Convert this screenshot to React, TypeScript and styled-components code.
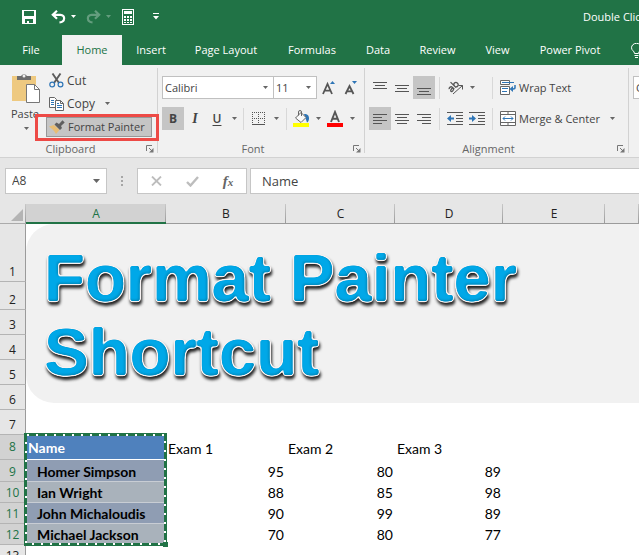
import React from "react";
import styled, { createGlobalStyle, css } from "styled-components";

const UI_FONT = '"Open Sans", "Noto Sans", sans-serif';
const CELL_FONT = 'Lato, "Open Sans", sans-serif';
const GREEN = "#217346";

const Global = createGlobalStyle`
  *, *::before, *::after { box-sizing: border-box; }
  body { margin: 0; background: #fff; overflow: hidden; }
  button, input, select { font: inherit; color: inherit; margin: 0; }
  button { cursor: pointer; }
  h1 { margin: 0; }
`;

const Page = styled.div`
  height: 100vh;
  display: flex;
  flex-direction: column;
  overflow: hidden;
  background: #e6e6e6;
  font: 11px/16px ${UI_FONT};
  color: #444;
`;

const PlainButton = styled.button`
  display: inline-flex;
  align-items: center;
  justify-content: center;
  flex: none;
  padding: 0;
  border: 0;
  background: none;
`;

/* ---------- title bar and tabs ---------- */

const TitleBar = styled.header`
  display: flex;
  align-items: center;
  height: 33px;
  padding-left: 21px;
  background: ${GREEN};
  color: #fff;
`;

const QuickButton = styled(PlainButton)<{ $w: number; $dim?: boolean }>`
  width: ${(p) => p.$w}px;
  height: 24px;
  opacity: ${(p) => (p.$dim ? 0.3 : 1)};
`;

const DocTitle = styled.div`
  flex: 1;
  min-width: 0;
  padding-left: 418px;
  overflow: hidden;
  white-space: nowrap;
`;

const TabBar = styled.nav`
  display: flex;
  height: 32px;
  padding-top: 2px;
  background: ${GREEN};
  overflow: hidden;
`;

const Tab = styled(PlainButton)<{ $w: number; $active?: boolean }>`
  width: ${(p) => p.$w}px;
  background: ${(p) => (p.$active ? "#f1f1f1" : "transparent")};
  color: ${(p) => (p.$active ? GREEN : "#fff")};
  white-space: nowrap;
`;

/* ---------- ribbon ---------- */

const Ribbon = styled.section`
  display: flex;
  height: 93px;
  padding-top: 3px;
  background: #f1f1f1;
  border-bottom: 1px solid #d2d2d2;
  overflow: hidden;
`;

const Group = styled.div<{ $w: number }>`
  position: relative;
  flex: none;
  display: flex;
  flex-direction: column;
  width: ${(p) => p.$w}px;
  margin-bottom: 4px;
  border-right: 1px solid #d2d2d2;
`;

const GroupBody = styled.div`
  display: flex;
  flex: none;
  flex-direction: column;
  gap: 8px;
  height: 73px;
  padding: 8px 0 0 4px;
`;

const ClipboardBody = styled.div`
  display: flex;
  flex: none;
  height: 73px;
  padding-left: 6px;
`;

const GroupFooter = styled.div`
  display: flex;
  flex: none;
  align-items: center;
  height: 16px;
  padding-right: 3px;
  color: #666;
`;

const GroupName = styled.span`
  flex: 1;
  padding-right: 5px;
  text-align: center;
`;

const Line = styled.div`
  display: flex;
  align-items: center;
  height: 23px;
`;

const Divider = styled.span<{ $mx?: number }>`
  width: 1px;
  height: 22px;
  margin: 0 ${(p) => p.$mx ?? 3}px;
  background: #d8d8d8;
`;

const Tool = styled(PlainButton)<{ $on?: boolean; $w?: number }>`
  width: ${(p) => p.$w ?? 22}px;
  height: 23px;
  background: ${(p) => (p.$on ? "#c5c5c5" : "transparent")};
  font-size: 12px;
`;

const Letter = styled.span<{ $kind: "b" | "i" | "u" }>`
  ${(p) => p.$kind === "b" && css`font-weight: 700;`}
  ${(p) => p.$kind === "i" && css`font: italic 700 14px "Liberation Serif", serif;`}
  ${(p) => p.$kind === "u" && css`font-weight: 600; text-decoration: underline; text-underline-offset: 2px;`}
`;

const PasteButton = styled(PlainButton)`
  flex-direction: column;
  justify-content: flex-start;
  width: 40px;
  padding-top: 4px;
`;

const PasteLabel = styled.span`
  margin: 3px 2px 5px 0;
  font-size: 11px;
`;

const CommandList = styled.div`
  display: flex;
  flex-direction: column;
  align-items: flex-start;
  padding-top: 1px;
`;

const Command = styled(PlainButton)<{ $on?: boolean }>`
  justify-content: flex-start;
  gap: 3px;
  height: ${(p) => (p.$on ? 20 : 23)}px;
  margin-top: ${(p) => (p.$on ? 2 : 0)}px;
  padding: 0 6px 0 2px;
  border: 1px solid ${(p) => (p.$on ? "#979797" : "transparent")};
  background: ${(p) => (p.$on ? "#c5c5c5" : "transparent")};
  font-size: ${(p) => (p.$on ? 11 : 12)}px;
  white-space: nowrap;
`;

const CaretSpace = styled.span`
  display: inline-flex;
  margin-left: 7px;
`;

const Highlight = styled.div`
  position: absolute;
  left: 35px;
  top: 46px;
  width: 124px;
  height: 27px;
  border: 3px solid #ed4a46;
  z-index: 2;
  pointer-events: none;
`;

const Combo = styled.div<{ $w: number }>`
  display: flex;
  align-items: center;
  flex: none;
  width: ${(p) => p.$w}px;
  height: 23px;
  padding-right: 5px;
  border: 1px solid #c0c0c0;
  background: #fff;
  & + & { margin-left: -1px; }
`;

const ComboInput = styled.input`
  flex: 1;
  min-width: 0;
  width: 100%;
  padding: 0 0 0 2px;
  border: 0;
  outline: 0;
  background: transparent;
`;

const WideTool = styled(PlainButton)`
  gap: 3px;
  height: 23px;
  padding-left: 3px;
  white-space: nowrap;
`;

const Pusher = styled.span<{ $w: number }>`
  flex: none;
  width: ${(p) => p.$w}px;
`;

/* ---------- formula bar ---------- */

const FormulaBar = styled.section`
  display: flex;
  align-items: center;
  height: 46px;
  padding: 0 0 0 5px;
  font-size: 13px;
`;

const Box = styled.div`
  display: flex;
  align-items: center;
  height: 26px;
  border: 1px solid #c6c6c6;
  background: #fff;
`;

const NameBox = styled(Box)`
  flex: none;
  width: 102px;
  padding-right: 6px;
  input { padding-left: 6px; font-size: 12px; }
`;

const Grip = styled.span`
  display: flex;
  flex: none;
  justify-content: center;
  width: 30px;
`;

const FormulaTools = styled(Box)`
  flex: none;
  width: 110px;
  margin-right: 3px;
`;

const FormulaField = styled(Box)`
  flex: 1;
  min-width: 0;
  border-right: 0;
  input { padding-left: 11px; }
`;

/* ---------- sheet ---------- */

const Sheet = styled.main`
  position: relative;
  flex: 1;
  min-height: 0;
  overflow: hidden;
`;

const Grid = styled.table`
  width: 100%;
  table-layout: fixed;
  border-collapse: separate;
  border-spacing: 0;
  background: #fff;
  color: #000;
  font: 14px/18px ${CELL_FONT};
`;

const Col = styled.col<{ $w?: number }>`
  width: ${(p) => (p.$w ? `${p.$w}px` : "auto")};
`;

const Row = styled.tr<{ $h: number; $middle?: boolean }>`
  height: ${(p) => p.$h}px;
  vertical-align: ${(p) => (p.$middle ? "middle" : "bottom")};
`;

const ColHead = styled.th<{ $on?: boolean }>`
  height: 20px;
  padding: 0;
  font: 12px/17px ${UI_FONT};
  color: ${(p) => (p.$on ? GREEN : "#222")};
  background:
    linear-gradient(#c8c8c8, #9b9b9b) right / 1px 100% no-repeat,
    ${(p) => (p.$on ? "#d2d2d2" : "#e6e6e6")};
  border-bottom: ${(p) => (p.$on ? `2px solid ${GREEN}` : "1px solid #9b9b9b")};
`;

const Corner = styled.th`
  padding: 0;
  background: linear-gradient(#c8c8c8, #9b9b9b) right / 1px 100% no-repeat, #e6e6e6;
  border-bottom: 1px solid #ababab;
  text-align: right;
  svg { display: block; margin: 2px 3px 0 auto; }
`;

const RowHead = styled.th<{ $on?: boolean }>`
  padding: 0;
  vertical-align: inherit;
  font: 12px/18px ${UI_FONT};
  color: ${(p) => (p.$on ? GREEN : "#222")};
  background: ${(p) => (p.$on ? "#d2d2d2" : "#e6e6e6")};
  border-right: 1px solid #9b9b9b;
  border-bottom: 1px solid #b4b4b4;
`;

type Tone = "head" | "dark" | "light";

const Cell = styled.td<{ $num?: boolean; $tone?: Tone }>`
  position: relative;
  padding: 0 ${(p) => (p.$num ? 2 : 0)}px 1px 2px;
  vertical-align: inherit;
  text-align: ${(p) => (p.$num ? "right" : "left")};
  white-space: nowrap;
  ${(p) => p.$tone === "head" && css`
    padding: 2px 0 0 2px; background: #4f81bd; color: #fff; font-weight: 700; border-bottom: 1px solid #fff;
  `}
  ${(p) => (p.$tone === "dark" || p.$tone === "light") && css`
    padding: 0 0 0 11px; font-weight: 700; border-bottom: 1px solid #c8cdd4;
    background: ${p.$tone === "dark" ? "#8f9db3" : "#a9b2bb"};
  `}
`;

const HeadingCell = styled(Cell)`
  padding: 2px 0 0 2px;
`;

const Marquee = styled.svg`
  position: absolute;
  left: -2px;
  top: -2px;
  width: 144px;
  height: 114px;
  z-index: 2;
  pointer-events: none;
  overflow: visible;
`;

const Banner = styled.div`
  position: absolute;
  left: 26px;
  right: 0;
  top: 20px;
  height: 179px;
  padding: 17px 0 0 18px;
  border-radius: 28px 0 0 28px;
  background: #f1f1f1;
  overflow: hidden;
`;

const WordArt = styled.h1`
  font: 700 67px/74px "Liberation Sans", Arial, sans-serif;
  color: #00a8e8;
  white-space: nowrap;
  filter: url(#wordart);
`;

/* ---------- drawings ---------- */

const Caret = ({ c = "#666", w = 5 }: { c?: string; w?: number }) => (
  <svg width={w} height={w > 5 ? 4 : 3} viewBox="0 0 6 3" preserveAspectRatio="none" aria-hidden="true">
    <path d="M0 0h6L3 3z" fill={c} />
  </svg>
);

const Lines = ({ rows, y = 0 }: { rows: [number, number][]; y?: number }) => (
  <svg width="14" height="14" viewBox="0 0 14 14" shapeRendering="crispEdges" aria-hidden="true">
    {rows.map(([x, w], i) => (
      <rect key={i} x={x} y={y + i * 3} width={w} height="1" fill="#555" />
    ))}
  </svg>
);

const Launcher = () => (
  <PlainButton aria-label="More options">
    <svg width="8" height="8" viewBox="0 0 8 8" fill="none" stroke="#777" aria-hidden="true">
      <path d="M.5 6V.5H6M3 3l3 3" />
      <path d="M7.500 3v4.500H3z" fill="#777" stroke="none" />
    </svg>
  </PlainButton>
);

const SaveIcon = () => (
  <svg width="14" height="14" viewBox="0 0 14 14" aria-hidden="true">
    <path fill="#fff" fillRule="evenodd" d="M0 0h14v14H0zM2 1v5h10V1zM3 9v4h2v-2h2v2h4V9z" />
  </svg>
);

const UndoIcon = ({ flip }: { flip?: boolean }) => (
  <svg width="15" height="14" viewBox="0 0 15 14" fill="none" stroke="#fff" strokeWidth="2.2" aria-hidden="true">
    <g transform={flip ? "translate(15 0) scale(-1 1)" : undefined}>
      <path d="M6 .8L1.800 4.800 6 8.800M2 4.800h7.500c5 0 5 7.400-1 7.600" />
    </g>
  </svg>
);

const CalculatorIcon = () => (
  <svg width="12" height="16" viewBox="0 0 12 16" shapeRendering="crispEdges" aria-hidden="true">
    <path fill="#fff" fillRule="evenodd" d="M0 0h12v16H0zM1 1v14h10V1z" />
    <path fill="#fff" d="M2 2h8v3H2zM2 7h2v2H2zM5 7h2v2H5zM8 7h2v2H8zM2 10h2v2H2zM5 10h2v2H5zM8 10h2v2H8zM2 13h2v1H2zM5 13h2v1H5zM8 13h2v1H8z" />
  </svg>
);

const CustomizeIcon = () => (
  <svg width="6" height="7" viewBox="0 0 6 7" aria-hidden="true">
    <path fill="#fff" d="M0 0h6v1H0zM0 3h6L3 6.500z" />
  </svg>
);

const BulbIcon = () => (
  <svg width="11" height="15" viewBox="0 0 11 15" fill="none" stroke="#fff" aria-hidden="true">
    <path d="M3.500 10.500C3.500 8 .5 7.500.5 4.800a5 4.500 0 0 1 10 0c0 2.700-3 3.200-3 5.700zM3.500 12.500h4M4 14.500h3" />
  </svg>
);

const PasteIcon = () => (
  <svg width="29" height="31" viewBox="0 0 29 31" aria-hidden="true">
    <path d="M0 4h24v25H0z" fill="#eec980" />
    <path d="M5 4h4a3.500 3.500 0 0 1 6 0h4v4H5z" fill="#6d6d6d" />
    <circle cx="12" cy="4" r="1.500" fill="#f1f1f1" />
    <path d="M14.500 12.500h8l5 5v13h-13z" fill="#fff" stroke="#777" />
    <path d="M22.500 12.500v5h5" fill="none" stroke="#777" />
  </svg>
);

const CutIcon = () => (
  <svg width="15" height="15" viewBox="0 0 15 15" fill="none" aria-hidden="true">
    <path d="M3.500.5l6.500 9.500M11.500.5L5 10" stroke="#5c5c5c" strokeWidth="1.900" />
    <circle cx="3.200" cy="11.500" r="2.400" stroke="#2e75b6" strokeWidth="1.200" />
    <circle cx="11.500" cy="11.500" r="2.400" stroke="#2e75b6" strokeWidth="1.200" />
  </svg>
);

const CopyIcon = () => (
  <svg width="15" height="14" viewBox="0 0 15 14" aria-hidden="true">
    <path d="M.5.500h5l2 2v8h-7z" fill="#fff" stroke="#666" />
    <path d="M2 3.500h3M2 5.500h3M2 7.500h3" stroke="#2e75b6" />
    <path d="M6.500 3.500h5l3 3v7h-8z" fill="#fff" stroke="#666" />
    <path d="M11.500 3.500v3h3" fill="none" stroke="#666" />
    <path d="M8 6.500h2M8 8.500h5M8 10.500h5" stroke="#2e75b6" />
  </svg>
);

const BrushIcon = () => (
  <svg width="16" height="14" viewBox="0 0 16 14" aria-hidden="true">
    <path d="M0 6.500l5-1.500 5.500 5L7 14C5 10 2.500 8.500 0 6.500z" fill="#e8bd74" />
    <path d="M5.500 4.500l2-2 2.500 1.500L13.500.3l2.200 2.200L12 6l1 2-2 2z" fill="#5f5f5f" />
  </svg>
);

const GrowFont = ({ small }: { small?: boolean }) => (
  <svg width="16" height="15" viewBox="0 0 16 15" aria-hidden="true">
    <path
      d={small ? "M1.500 14L5.500 6l4 8M3 11.300h5" : "M1 14L5.500 4 10 14M2.700 10.700h5.600"}
      fill="none" stroke="#555" strokeWidth="1.800"
    />
    <path d={small ? "M8 1h5l-2.500 3z" : "M8 4h5l-2.500-3z"} fill="#2e75b6" />
  </svg>
);

const BordersIcon = () => (
  <svg width="13" height="13" viewBox="0 0 13 13" stroke="#555" fill="none" shapeRendering="crispEdges" aria-hidden="true">
    <path strokeDasharray="1 1" d="M0 .5h13M0 6.500h13M.5 0v12M6.500 0v12M12.500 0v12" />
    <path d="M0 12.500h13" />
  </svg>
);

const FillIcon = () => (
  <svg width="16" height="17" viewBox="0 0 16 17" aria-hidden="true">
    <path d="M11 4c4 0 5 2 5 4.500 0 1.500-.8 3.500-2 4z" fill="#2e75b6" />
    <path d="M8 2.500l5 5L8 12.500 2.500 8z" fill="#fafafa" stroke="#666" />
    <path d="M5.500 5.500V2a1.500 1.500 0 0 1 3 0v4" fill="none" stroke="#666" />
    <path d="M0 13h16v4H0z" fill="#ff0" />
  </svg>
);

const FontColorIcon = () => (
  <svg width="16" height="17" viewBox="0 0 16 17" aria-hidden="true">
    <path d="M4 12L8 2l4 10M5.500 8.700h5" fill="none" stroke="#555" strokeWidth="1.900" />
    <path d="M0 13h16v4H0z" fill="#f00" />
  </svg>
);

const OrientationIcon = () => (
  <svg width="17" height="15" viewBox="0 0 17 15" fill="none" stroke="#555" aria-hidden="true">
    <g transform="rotate(-45 6 6)" strokeWidth="1.300">
      <path d="M1 5.500c1-1.300 3.600-1 3.600.8v3M4.600 7C2 6.800.8 7.400.8 8.300c0 1.500 3 1.300 3.800-.3" />
      <path d="M7 1.500v7.800M7 7.200c0-3 4.200-3 4.200 0s-4.200 2.800-4.200 0" />
    </g>
    <path d="M6 14l9.500-8.500M11.500 5.500h4v4" />
  </svg>
);

const IndentIcon = ({ right }: { right?: boolean }) => (
  <svg width="16" height="14" viewBox="0 0 16 14" aria-hidden="true">
    <path d="M0 .5h16M9 3.500h7M9 6.500h7M9 9.500h7M0 12.500h16" stroke="#555" />
    <path d={right ? "M0 5.500h3V3l4 3.500-4 3.500V7.500H0z" : "M7 5.500H4V3L0 6.500 4 10V7.500h3z"} fill="#2e75b6" />
  </svg>
);

const WrapIcon = () => (
  <svg width="16" height="15" viewBox="0 0 16 15" fill="none" aria-hidden="true">
    <path d="M.5 4.500v-4h9v4zM.5 14.500v-8h9v8z" fill="#fff" stroke="#666" />
    <path d="M2 2.500h12M2 8.500h6M2 11.500h5" stroke="#2e75b6" />
    <path d="M15 5v2.500q0 1.500-2 1.500h-2" stroke="#2e75b6" strokeWidth="1.500" />
    <path d="M9.500 9L13 6v6z" fill="#2e75b6" />
  </svg>
);

const MergeIcon = () => (
  <svg width="16" height="15" viewBox="0 0 16 15" fill="none" aria-hidden="true">
    <path d="M.5.500h15v14H.5zM0 3.500h16M0 11.500h16M8 0v3.500M8 11.500V15" fill="#fff" stroke="#666" />
    <path d="M3 7.500h10M5 5.500l-2 2 2 2M11 5.500l2 2-2 2" stroke="#2e75b6" />
  </svg>
);

const GripDots = () => (
  <svg width="2" height="10" viewBox="0 0 2 10" aria-hidden="true">
    <path d="M0 0h2v2H0zM0 4h2v2H0zM0 8h2v2H0z" fill="#a6a6a6" />
  </svg>
);

const CancelIcon = () => (
  <svg width="11" height="10" viewBox="0 0 11 10" aria-hidden="true">
    <path d="M1 .5l9 9M10 .5l-9 9" stroke="#bdbdbd" strokeWidth="1.800" />
  </svg>
);

const EnterIcon = () => (
  <svg width="13" height="11" viewBox="0 0 13 11" aria-hidden="true">
    <path d="M1 6l3.500 3.500L12 1" fill="none" stroke="#bdbdbd" strokeWidth="2.400" />
  </svg>
);

const Fx = styled.span`
  font: italic 700 15px "Liberation Serif", serif;
  color: #666;
  small { font-size: 11px; }
`;

const WordArtFilter = () => (
  <svg width="0" height="0" aria-hidden="true" display="block">
    <filter id="wordart" x="-5%" y="-10%" width="110%" height="120%" colorInterpolationFilters="sRGB">
      <feGaussianBlur in="SourceAlpha" stdDeviation="1.3" result="soft" />
      <feComponentTransfer in="soft" result="body">
        <feFuncA type="linear" slope="4" intercept="-1.5" />
      </feComponentTransfer>
      <feGaussianBlur in="body" stdDeviation="1.2" result="wideSoft" />
      <feComponentTransfer in="wideSoft" result="edge">
        <feFuncA type="linear" slope="7" intercept="-0.4" />
      </feComponentTransfer>
      <feFlood floodColor="#f7f2f2" />
      <feComposite in2="edge" operator="in" result="outline" />
      <feOffset in="edge" dx="1" dy="3" />
      <feGaussianBlur stdDeviation="1.8" result="cast" />
      <feFlood floodColor="#222" floodOpacity="1" />
      <feComposite in2="cast" operator="in" result="shadow" />
      <feFlood floodColor="#00a8e8" />
      <feComposite in2="body" operator="in" result="blue" />
      <feOffset in="body" dx="-1" dy="-1" />
      <feGaussianBlur stdDeviation="0.8" result="shifted" />
      <feFlood floodColor="#0086b8" />
      <feComposite in2="body" operator="in" />
      <feComposite in2="shifted" operator="out" result="bevel" />
      <feMerge>
        <feMergeNode in="shadow" />
        <feMergeNode in="outline" />
        <feMergeNode in="blue" />
        <feMergeNode in="bevel" />
      </feMerge>
    </filter>
  </svg>
);

/* ---------- data ---------- */

const TABS: [string, number][] = [
  ["File", 62], ["Home", 60], ["Insert", 58], ["Page Layout", 92], ["Formulas", 80],
  ["Data", 52], ["Review", 67], ["View", 53], ["Power Pivot", 92],
];

const COLUMNS: [string, number][] = [["A", 140], ["B", 120], ["C", 109], ["D", 108], ["E", 102]];

const BLANK_ROWS: [number, number][] = [[1, 58], [2, 28], [3, 25], [4, 25], [5, 25], [6, 25], [7, 25]];

const SCORES: { row: number; h: number; name: string; marks: number[] }[] = [
  { row: 9, h: 22, name: "Homer Simpson", marks: [95, 80, 89] },
  { row: 10, h: 21, name: "Ian Wright", marks: [88, 85, 98] },
  { row: 11, h: 21, name: "John Michaloudis", marks: [90, 99, 89] },
  { row: 12, h: 21, name: "Michael Jackson", marks: [70, 80, 77] },
];

const Blank = ({ n }: { n: number }) => <>{Array.from({ length: n }, (_, i) => <Cell key={i} />)}</>;

export default function App() {
  return (
    <Page>
      <Global />
      <WordArtFilter />
      <TitleBar>
        <QuickButton $w={16} aria-label="Save"><SaveIcon /></QuickButton>
        <Pusher $w={12} />
        <QuickButton $w={18} aria-label="Undo"><UndoIcon /></QuickButton>
        <QuickButton $w={13} aria-label="Undo history"><Caret c="#fff" /></QuickButton>
        <Pusher $w={4} />
        <QuickButton $w={18} $dim aria-label="Redo"><UndoIcon flip /></QuickButton>
        <QuickButton $w={13} $dim aria-label="Redo history"><Caret c="#fff" /></QuickButton>
        <Pusher $w={4} />
        <QuickButton $w={18} aria-label="Calculator"><CalculatorIcon /></QuickButton>
        <Pusher $w={10} />
        <QuickButton $w={18} aria-label="Customize toolbar"><CustomizeIcon /></QuickButton>
        <DocTitle>Double Click</DocTitle>
      </TitleBar>
      <TabBar>
        {TABS.map(([name, w]) => (
          <Tab key={name} $w={w} $active={name === "Home"}>{name}</Tab>
        ))}
        <Tab $w={40} aria-label="Tell me"><BulbIcon /></Tab>
      </TabBar>

      <Ribbon>
        <Group $w={158}>
          <ClipboardBody>
            <PasteButton>
              <PasteIcon />
              <PasteLabel>Paste</PasteLabel>
              <Caret />
            </PasteButton>
            <CommandList>
              <Command><CutIcon />Cut</Command>
              <Command><CopyIcon />Copy<CaretSpace><Caret /></CaretSpace></Command>
              <Command $on><BrushIcon />Format Painter</Command>
            </CommandList>
          </ClipboardBody>
          <GroupFooter><GroupName>Clipboard</GroupName><Launcher /></GroupFooter>
          <Highlight />
        </Group>

        <Group $w={207}>
          <GroupBody>
            <Line>
              <Combo $w={112}>
                <ComboInput aria-label="Font" defaultValue="Calibri" /><Caret />
              </Combo>
              <Combo $w={44}>
                <ComboInput aria-label="Font size" defaultValue="11" /><Caret />
              </Combo>
              <Pusher $w={2} />
              <Tool aria-label="Increase font size"><GrowFont /></Tool>
              <Tool aria-label="Decrease font size"><GrowFont small /></Tool>
            </Line>
            <Line>
              <Tool $on aria-label="Bold"><Letter $kind="b">B</Letter></Tool>
              <Tool aria-label="Italic"><Letter $kind="i">I</Letter></Tool>
              <Tool aria-label="Underline"><Letter $kind="u">U</Letter></Tool>
              <Tool $w={12} aria-label="Underline style"><Caret /></Tool>
              <Divider />
              <Tool aria-label="Borders"><BordersIcon /></Tool>
              <Tool $w={14} aria-label="Border style"><Caret /></Tool>
              <Divider />
              <Tool aria-label="Fill color"><FillIcon /></Tool>
              <Tool $w={12} aria-label="Fill color options"><Caret /></Tool>
              <Tool aria-label="Font color"><FontColorIcon /></Tool>
              <Tool $w={12} aria-label="Font color options"><Caret /></Tool>
            </Line>
          </GroupBody>
          <GroupFooter><GroupName>Font</GroupName><Launcher /></GroupFooter>
        </Group>

        <Group $w={264}>
          <GroupBody>
            <Line>
              <Tool aria-label="Top align"><Lines y={1} rows={[[0, 14], [2, 10], [0, 14]]} /></Tool>
              <Tool aria-label="Middle align"><Lines y={4} rows={[[0, 14], [2, 10], [0, 14]]} /></Tool>
              <Tool $on aria-label="Bottom align"><Lines y={7} rows={[[0, 14], [2, 10], [0, 14]]} /></Tool>
              <Divider $mx={4} />
              <Tool aria-label="Orientation"><OrientationIcon /></Tool>
              <Tool $w={12} aria-label="Orientation options"><Caret /></Tool>
              <Pusher $w={10} />
              <Divider $mx={4} />
              <WideTool><WrapIcon />Wrap Text</WideTool>
            </Line>
            <Line>
              <Tool $on aria-label="Align left"><Lines rows={[[0, 14], [0, 9], [0, 14], [0, 9]]} y={2} /></Tool>
              <Tool aria-label="Center"><Lines rows={[[0, 14], [2, 10], [0, 14], [2, 10]]} y={2} /></Tool>
              <Tool aria-label="Align right"><Lines rows={[[0, 14], [5, 9], [0, 14], [5, 9]]} y={2} /></Tool>
              <Divider $mx={4} />
              <Tool aria-label="Decrease indent"><IndentIcon /></Tool>
              <Tool aria-label="Increase indent"><IndentIcon right /></Tool>
              <Divider $mx={4} />
              <WideTool><MergeIcon />Merge &amp; Center<CaretSpace><Caret /></CaretSpace></WideTool>
            </Line>
          </GroupBody>
          <GroupFooter><GroupName>Alignment</GroupName><Launcher /></GroupFooter>
        </Group>

        <Group $w={130}>
          <GroupBody>
            <Line><Combo $w={110}><ComboInput aria-label="Number format" defaultValue="General" /><Caret /></Combo></Line>
          </GroupBody>
        </Group>
      </Ribbon>

      <FormulaBar>
        <NameBox><ComboInput aria-label="Name box" defaultValue="A8" /><Caret w={7} /></NameBox>
        <Grip><GripDots /></Grip>
        <FormulaTools>
          <Tool $w={36} aria-label="Cancel"><CancelIcon /></Tool>
          <Tool $w={36} aria-label="Enter"><EnterIcon /></Tool>
          <Tool $w={36} aria-label="Insert function"><Fx>f<small>x</small></Fx></Tool>
        </FormulaTools>
        <FormulaField><ComboInput aria-label="Formula" defaultValue="Name" /></FormulaField>
      </FormulaBar>

      <Sheet>
        <Grid>
          <colgroup>
            <Col $w={26} />
            {COLUMNS.map(([c, w]) => <Col key={c} $w={w} />)}
            <Col />
          </colgroup>
          <thead>
            <tr>
              <Corner aria-label="Select all">
                <svg width="12" height="12" viewBox="0 0 12 12" aria-hidden="true"><path d="M12 0v12H0z" fill="#b4b4b4" /></svg>
              </Corner>
              {COLUMNS.map(([c]) => <ColHead key={c} scope="col" $on={c === "A"}>{c}</ColHead>)}
              <ColHead />
            </tr>
          </thead>
          <tbody>
            {BLANK_ROWS.map(([n, h]) => (
              <Row key={n} $h={h}><RowHead scope="row">{n}</RowHead><Blank n={6} /></Row>
            ))}
            <Row $h={25} $middle>
              <RowHead scope="row" $on>8</RowHead>
              <Cell $tone="head">
                Name
                <Marquee aria-hidden="true" shapeRendering="crispEdges">
                  <rect x="1.500" y="1.500" width="140" height="110" fill="none" stroke={GREEN} strokeWidth="3" />
                  <rect x="2" y="2" width="139" height="109" fill="none" stroke="#fff" strokeWidth="2" strokeDasharray="2 7" strokeDashoffset="-1" />
                  <rect x="139" y="109" width="5" height="5" fill={GREEN} />
                </Marquee>
              </Cell>
              <HeadingCell>Exam 1</HeadingCell>
              <HeadingCell>Exam 2</HeadingCell>
              <HeadingCell>Exam 3</HeadingCell>
              <Blank n={2} />
            </Row>
            {SCORES.map((s, i) => (
              <Row key={s.row} $h={s.h}>
                <RowHead scope="row" $on>{s.row}</RowHead>
                <Cell $tone={i % 2 ? "light" : "dark"}>{s.name}</Cell>
                {s.marks.map((m, j) => <Cell key={j} $num>{m}</Cell>)}
                <Blank n={2} />
              </Row>
            ))}
            <Row $h={21}><RowHead scope="row">13</RowHead><Blank n={6} /></Row>
          </tbody>
        </Grid>
        <Banner>
          <WordArt>Format Painter<br />Shortcut</WordArt>
        </Banner>
      </Sheet>
    </Page>
  );
}
